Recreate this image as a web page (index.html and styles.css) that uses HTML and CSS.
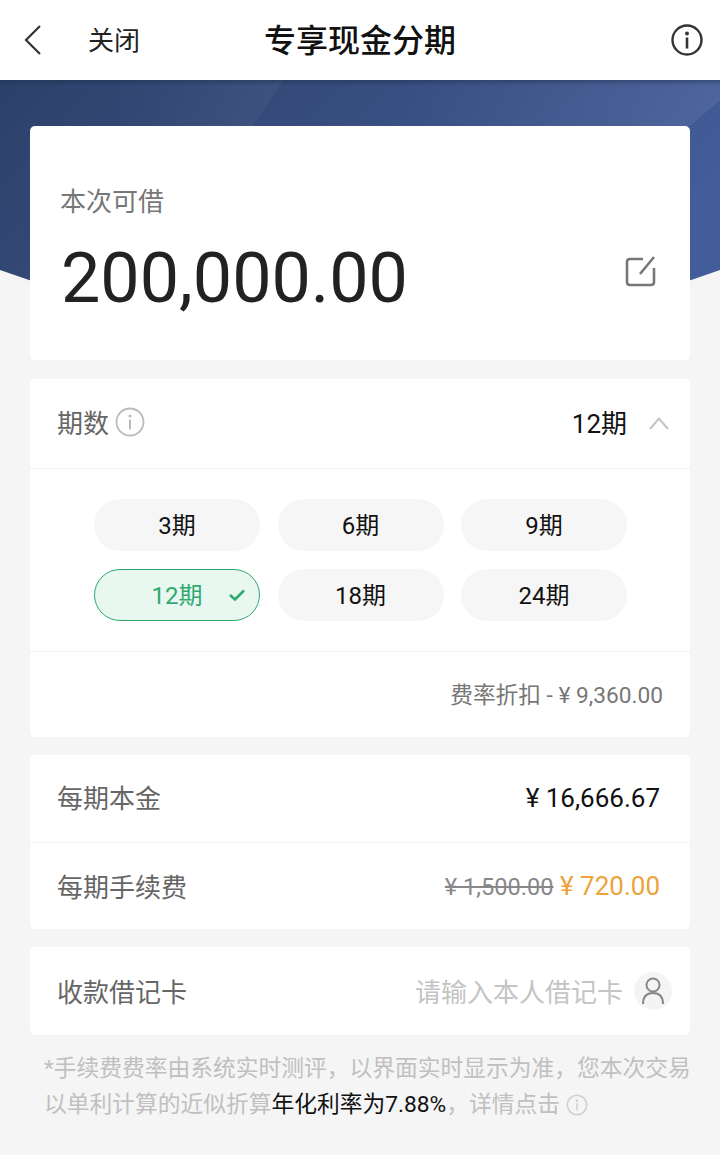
FILE: index.html
```html
<!DOCTYPE html>
<html lang="zh-CN">
<head>
    <meta charset="UTF-8">
    <meta name="viewport" content="width=device-width, initial-scale=1.0">
    <title>专享现金分期</title>
    <link rel="stylesheet" href="styles.css">
</head>
<body>
    <!-- Top bar -->
    <header class="topbar">
        <div class="topbar-left">
            <svg class="back-icon" width="20" height="32" viewBox="0 0 20 32"><path d="M17 2 L3 16 L17 30" fill="none" stroke="#333" stroke-width="2.2"/></svg>
            <span class="close-text">关闭</span>
        </div>
        <h1 class="page-title">专享现金分期</h1>
        <svg class="info-icon" width="32" height="32" viewBox="0 0 32 32"><circle cx="16" cy="16" r="14.5" fill="none" stroke="#333" stroke-width="2.4"/><circle cx="16" cy="9.5" r="1.9" fill="#333"/><rect x="14.7" y="13.5" width="2.6" height="11" fill="#333"/></svg>
    </header>

    <!-- Blue backdrop behind the first card -->
    <svg class="hero-bg" width="720" height="260" viewBox="0 0 720 260" preserveAspectRatio="none">
        <defs>
            <linearGradient id="heroGrad" x1="0" y1="0" x2="1" y2="0.35">
                <stop offset="0" stop-color="#2c4169"/>
                <stop offset="0.5" stop-color="#384e80"/>
                <stop offset="1" stop-color="#435c9a"/>
            </linearGradient>
            <linearGradient id="bandLeft" gradientUnits="userSpaceOnUse" x1="110" y1="0" x2="283" y2="0">
                <stop offset="0" stop-color="#ffffff" stop-opacity="0"/>
                <stop offset="1" stop-color="#ffffff" stop-opacity="0.045"/>
            </linearGradient>
            <linearGradient id="bandRight" gradientUnits="userSpaceOnUse" x1="400" y1="0" x2="720" y2="0">
                <stop offset="0" stop-color="#ffffff" stop-opacity="0"/>
                <stop offset="1" stop-color="#ffffff" stop-opacity="0.07"/>
            </linearGradient>
            <linearGradient id="heroTop" x1="0" y1="0" x2="0" y2="1">
                <stop offset="0" stop-color="#1c2b4a" stop-opacity="0.4"/>
                <stop offset="1" stop-color="#1c2b4a" stop-opacity="0"/>
            </linearGradient>
        </defs>
        <path d="M0 0 H720 V190 Q360 320 0 190 Z" fill="url(#heroGrad)"/>
        <path d="M110 0 H283 L253 46 H110 Z" fill="url(#bandLeft)"/>
        <path d="M400 0 H720 V20 L690 46 H400 Z" fill="url(#bandRight)"/>
        <rect width="720" height="6" fill="url(#heroTop)"/>
    </svg>

    <main class="content">
        <!-- Amount -->
        <section class="card amount-card">
            <div class="amount-label">本次可借</div>
            <div class="amount-row">
                <span class="amount-value">200,000.00</span>
                <svg class="edit-icon" width="32" height="32" viewBox="0 0 32 32"><path d="M18 4 H5 Q2 4 2 7 V27 Q2 30 5 30 H26 Q29 30 29 27 V13" fill="none" stroke="#777" stroke-width="2.6"/><path d="M15 19 L29 2" fill="none" stroke="#777" stroke-width="2.6"/></svg>
            </div>
        </section>

        <!-- Term picker -->
        <section class="card">
            <div class="row term-head">
                <span class="row-label">期数
                    <svg class="term-info" width="30" height="30" viewBox="0 0 30 30"><circle cx="15" cy="15" r="13.5" fill="none" stroke="#bbb" stroke-width="1.8"/><circle cx="15" cy="9" r="1.6" fill="#bbb"/><rect x="14" y="12.5" width="2" height="10" fill="#bbb"/></svg>
                </span>
                <span class="term-current">12期
                    <svg class="chevron" width="20" height="14" viewBox="0 0 20 14"><path d="M1 13 L10 2.5 L19 13" fill="none" stroke="#c4c4c4" stroke-width="2"/></svg>
                </span>
            </div>
            <div class="term-grid">
                <div class="pill">3期</div>
                <div class="pill">6期</div>
                <div class="pill">9期</div>
                <div class="pill pill-active">12期
                    <svg class="pill-check" width="18" height="14" viewBox="0 0 18 14"><path d="M2 7 L7 11.5 L16 2.5" fill="none" stroke="#2fa96f" stroke-width="2.6"/></svg>
                </div>
                <div class="pill">18期</div>
                <div class="pill">24期</div>
            </div>
            <div class="discount">费率折扣 - ¥ 9,360.00</div>
        </section>

        <!-- Repayment per term -->
        <section class="card">
            <div class="row">
                <span class="row-label">每期本金</span>
                <span class="row-value">¥ 16,666.67</span>
            </div>
            <div class="row row-fee">
                <span class="row-label">每期手续费</span>
                <span class="row-value"><s class="old-fee">¥ 1,500.00</s> <span class="new-fee">¥ 720.00</span></span>
            </div>
        </section>

        <!-- Debit card -->
        <section class="card">
            <div class="row row-debit">
                <span class="row-label">收款借记卡</span>
                <span class="debit-input">
                    <span class="debit-placeholder">请输入本人借记卡</span>
                    <span class="person-badge">
                        <svg width="24" height="30" viewBox="0 0 24 30"><circle cx="12" cy="9" r="6.5" fill="none" stroke="#888" stroke-width="2"/><path d="M2 28 Q2 17 12 17 Q22 17 22 28" fill="none" stroke="#888" stroke-width="2"/></svg>
                    </span>
                </span>
            </div>
        </section>

        <p class="note">*手续费费率由系统实时测评，以界面实时显示为准，您本次交易<br>以单利计算的近似折算<span class="note-strong">年化利率为7.88%</span>，详情点击
            <svg class="note-info" width="22" height="22" viewBox="0 0 22 22"><circle cx="11" cy="11" r="9.7" fill="none" stroke="#d0d0d0" stroke-width="1.6"/><circle cx="11" cy="6.8" r="1.2" fill="#d0d0d0"/><rect x="10.2" y="9.3" width="1.6" height="7" fill="#d0d0d0"/></svg>
        </p>
    </main>
</body>
</html>
```

FILE: styles.css
```css
* {
    box-sizing: border-box;
}

body {
    margin: 0;
    height: 1155px;
    overflow: hidden;
    position: relative;
    background-color: #f5f5f5;
    font-family: Roboto, "Noto Sans CJK SC", sans-serif;
    color: #111;
}

/* Top bar */
.topbar {
    height: 80px;
    padding: 0 17px 0 23px;
    background-color: #fff;
    display: flex;
    align-items: center;
    justify-content: space-between;
    position: relative;
}

.topbar-left {
    display: flex;
    align-items: center;
    gap: 45px;
}

.close-text {
    font-size: 26px;
    color: #222;
    padding-bottom: 4px;
}

.page-title {
    position: absolute;
    left: 0;
    right: 0;
    margin: 0;
    padding: 0 0 4px 0;
    text-align: center;
    font-size: 32px;
    font-weight: 500;
    color: #111;
}

.info-icon {
    position: relative;
}

/* Backdrop */
.hero-bg {
    position: absolute;
    top: 80px;
    left: 0;
    display: block;
}

/* Cards */
.content {
    position: relative;
    padding: 46px 30px 0;
    display: flex;
    flex-direction: column;
    gap: 18px;
}

.card {
    background-color: #fff;
    border-radius: 5px;
}

.amount-card {
    height: 234px;
    padding: 57px 30px 0 30px;
    margin-bottom: 1px;
}

.amount-label {
    font-size: 26px;
    line-height: 38px;
    color: #777;
}

.amount-row {
    margin-top: 16px;
    display: flex;
    align-items: center;
    justify-content: space-between;
}

.amount-value {
    font-size: 70px;
    line-height: 82px;
    margin-left: 1px;
    color: #222;
}

.edit-icon {
    margin-top: -14px;
    margin-right: 3px;
}

.row {
    height: 87px;
    padding: 0 30px 0 27px;
    display: flex;
    align-items: center;
    justify-content: space-between;
}

.row-label {
    font-size: 26px;
    color: #666;
    display: flex;
    align-items: center;
    gap: 6px;
    padding-bottom: 4px;
}

.row-value {
    font-size: 26px;
    color: #111;
    padding-bottom: 2px;
}

.row-fee {
    border-top: 1px solid #f3f3f3;
    padding-top: 2px;
}

/* Term picker */
.term-head {
    height: 90px;
    padding-right: 21px;
    border-bottom: 1px solid #f2f2f2;
}

.term-current {
    font-size: 26px;
    color: #111;
    display: flex;
    align-items: center;
    gap: 22px;
    padding-bottom: 4px;
}

.chevron {
    margin-top: 3px;
}

.term-grid {
    padding: 30px 63px 30px 64px;
    display: grid;
    grid-template-columns: repeat(3, 166px);
    justify-content: space-between;
    row-gap: 18px;
    border-bottom: 1px solid #f2f2f2;
}

.pill {
    height: 52px;
    border-radius: 26px;
    background-color: #f6f6f6;
    display: flex;
    align-items: center;
    justify-content: center;
    padding-bottom: 4px;
    font-size: 24px;
    color: #111;
    position: relative;
}

.pill-active {
    background-color: #e9f7f1;
    border: 1px solid #2fa96f;
    color: #2fa96f;
}

.pill-check {
    position: absolute;
    right: 13px;
    top: 18px;
}

.discount {
    height: 85px;
    padding: 0 27px 2px 0;
    display: flex;
    align-items: center;
    justify-content: flex-end;
    font-size: 22.7px;
    color: #777;
}

/* Fee */
.old-fee {
    font-size: 23.6px;
    color: #888;
}

.new-fee {
    color: #eda33a;
}

/* Debit card */
.row-debit {
    height: 88px;
    padding-top: 2px;
    padding-right: 18px;
}

.debit-input {
    font-size: 26px;
    color: #c4c4c4;
    display: flex;
    align-items: center;
    gap: 11px;
}

.debit-placeholder {
    padding-bottom: 4px;
}

.person-badge {
    width: 38px;
    height: 38px;
    margin-bottom: 2px;
    border-radius: 50%;
    background-color: #f4f4f4;
    display: flex;
    align-items: center;
    justify-content: center;
}

/* Footnote */
.note {
    margin: -2px -30px 0 14px;
    font-size: 22.75px;
    line-height: 36px;
    color: #c0c0c0;
}

.note-strong {
    color: #111;
}

.note-info {
    vertical-align: -4px;
}
```
